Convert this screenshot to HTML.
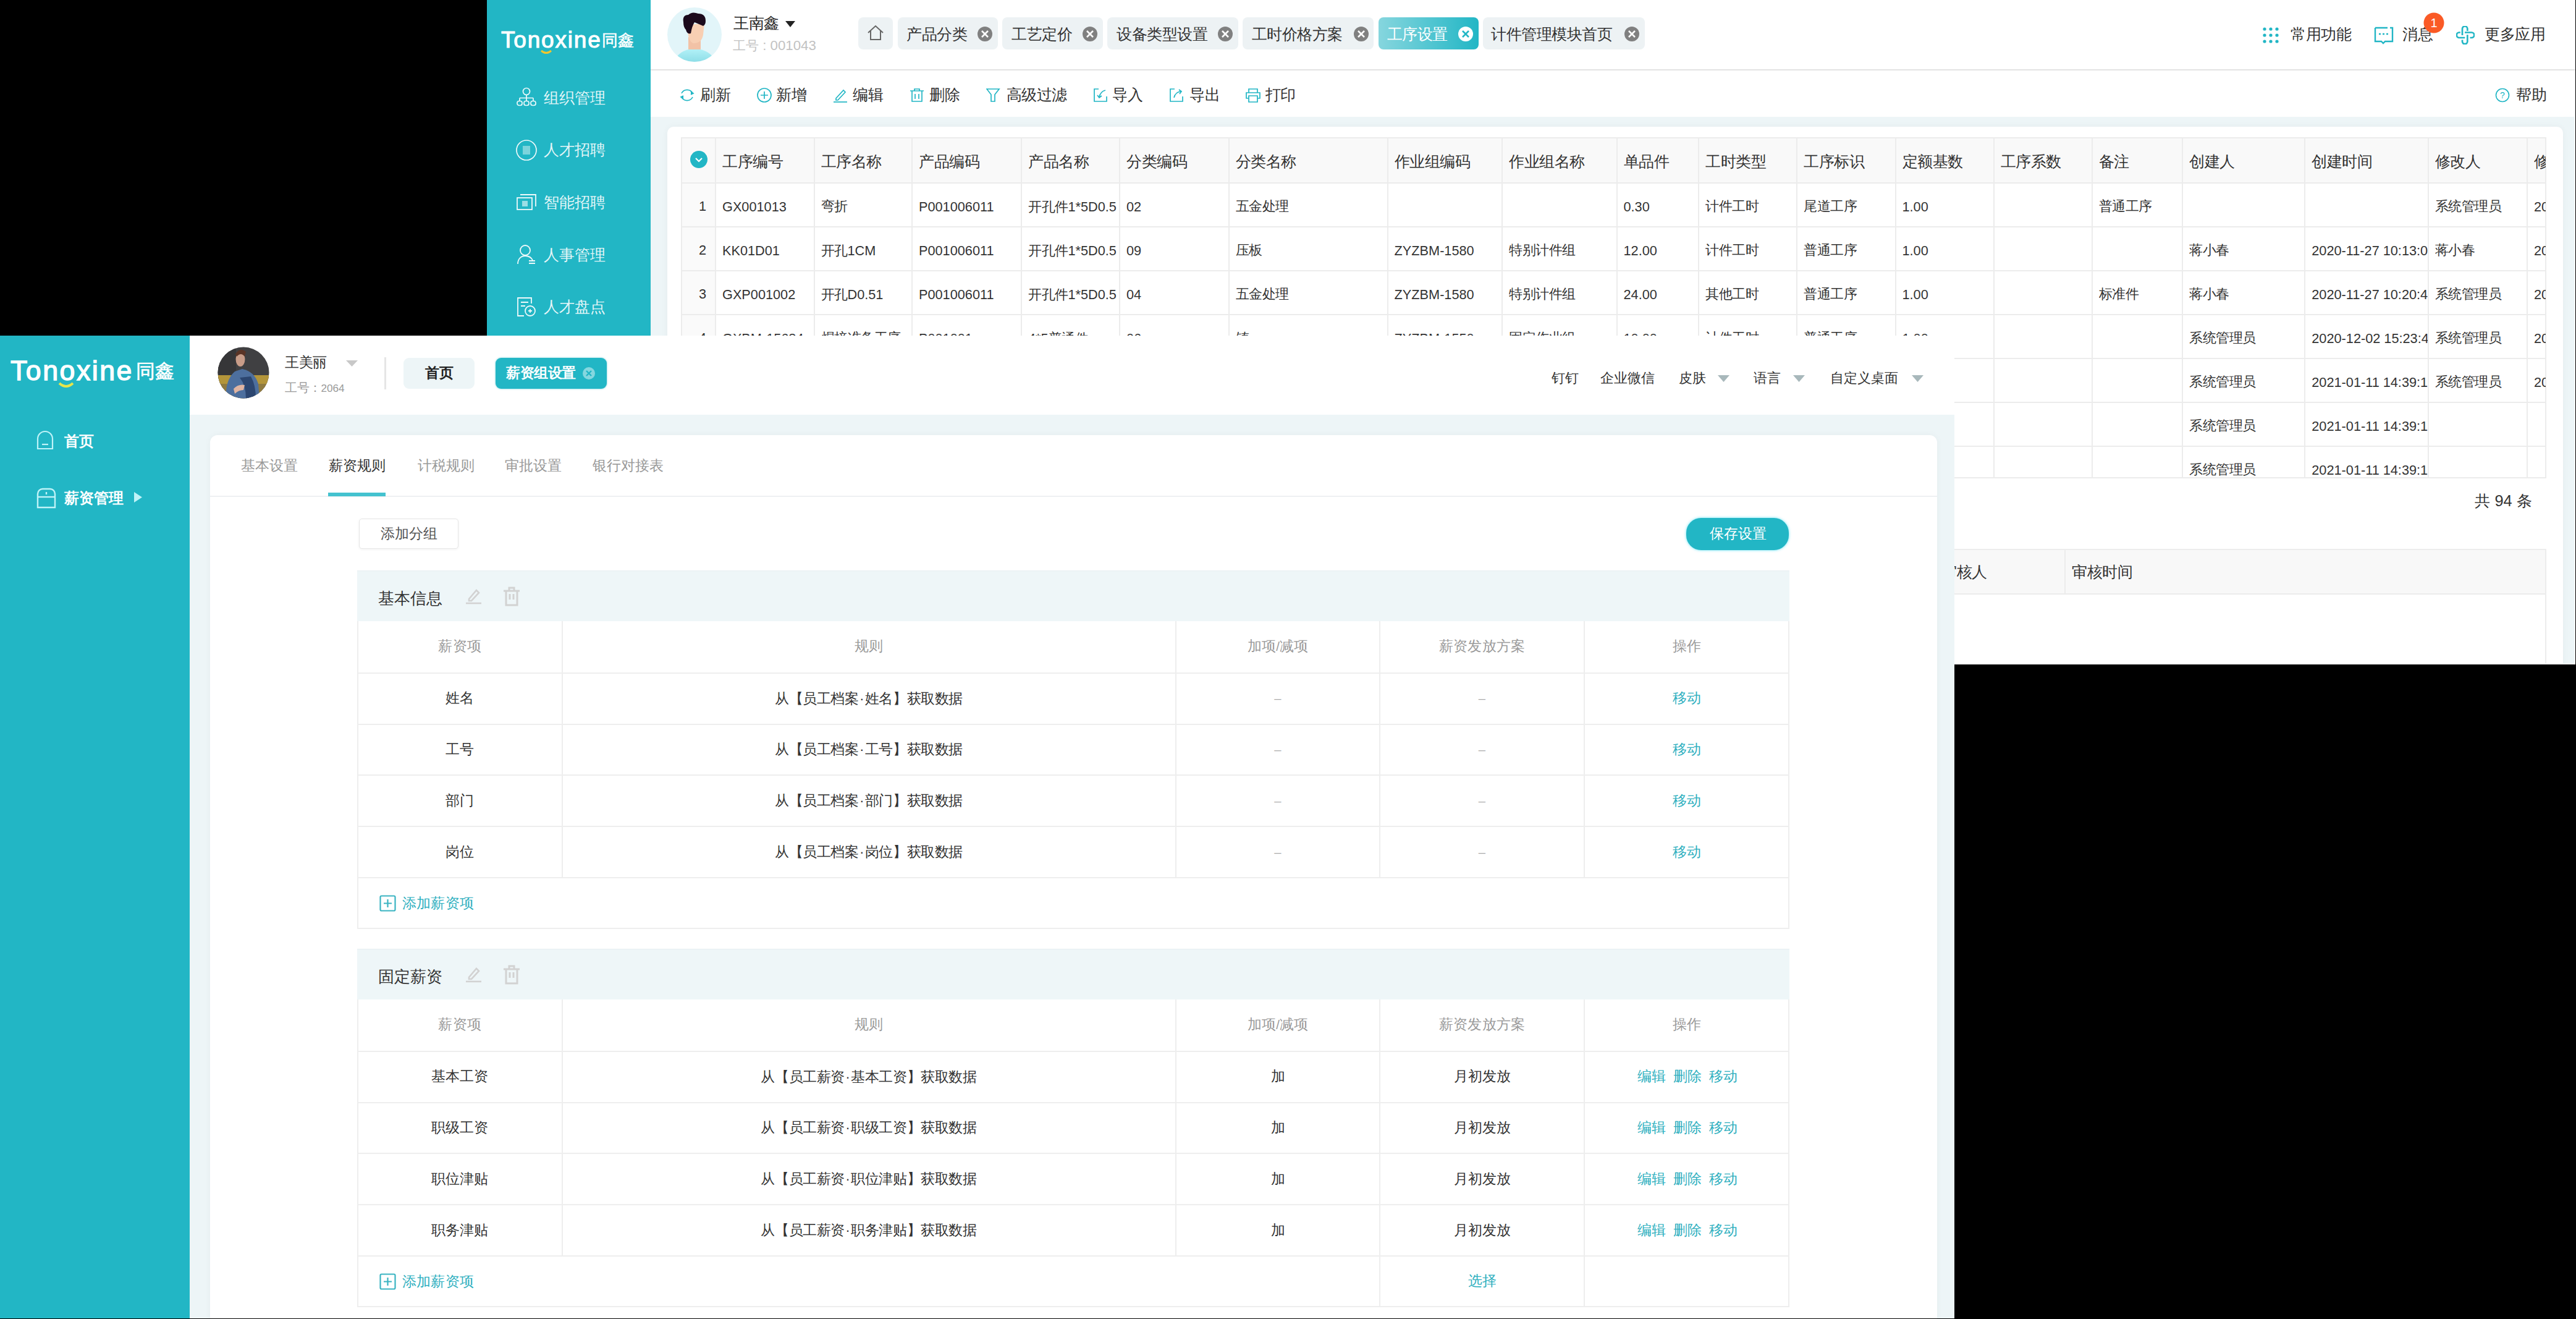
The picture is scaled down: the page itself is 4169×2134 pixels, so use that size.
<!DOCTYPE html>
<html><head><meta charset="utf-8"><style>
html,body{margin:0;padding:0}
body{width:4169px;height:2134px;position:relative;overflow:hidden;background:#000;font-family:"Liberation Sans",sans-serif}
div{position:absolute;box-sizing:border-box}
.layer{left:0;top:0;width:4169px;height:2134px}
i{font-style:normal;display:inline-block;width:1em;text-align:center}
u{text-decoration:none}
i.d{width:.45em}
</style></head><body>
<div class="layer" style="clip-path:inset(0px 0px 1059px 788px);background:transparent">
<div style="left:788px;top:0px;width:3381px;height:1075px;background:#edf5f7"></div>
<div style="left:788px;top:0px;width:265px;height:1075px;background:#22b6c5"></div>
<div style="left:811px;top:41.45px;font-size:37px;line-height:48.1px;color:#fff;font-weight:400;white-space:nowrap;letter-spacing:1.8px;-webkit-text-stroke:1.1px #fff">Tonoxine</div>
<div style="left:974px;top:49.42px;font-size:25.5px;line-height:33.15px;color:#fff;font-weight:400;white-space:nowrap;-webkit-text-stroke:0.5px #fff"><i>同</i><i>鑫</i></div>
<svg style="position:absolute;left:875px;top:81px;" width="18" height="8" viewBox="0 0 18 8"><path d="M1 1 Q9 8 17 1" stroke="#f2c62d" stroke-width="3" fill="none"/></svg>
<div style="left:880px;top:141.75px;font-size:25px;line-height:32.5px;color:rgba(255,255,255,0.88);font-weight:400;white-space:nowrap;"><i>组</i><i>织</i><i>管</i><i>理</i></div>
<svg style="position:absolute;left:835px;top:141px;" width="34" height="34" viewBox="0 0 34 34"><g stroke="#fff" stroke-width="1.7" fill="none" opacity=".92"><circle cx="17" cy="7" r="5.5"/><path d="M17 12.5v5M6 17.5h22M6 17.5v5M17 17.5v5M28 17.5v5"/><rect x="2" y="22.5" width="8" height="7" rx="3"/><rect x="13" y="22.5" width="8" height="7" rx="3"/><rect x="24" y="22.5" width="8" height="7" rx="3"/></g></svg>
<div style="left:880px;top:226.35px;font-size:25px;line-height:32.5px;color:rgba(255,255,255,0.88);font-weight:400;white-space:nowrap;"><i>人</i><i>才</i><i>招</i><i>聘</i></div>
<svg style="position:absolute;left:835px;top:226px;" width="34" height="34" viewBox="0 0 34 34"><g stroke="#fff" stroke-width="1.7" fill="none" opacity=".92"><circle cx="17" cy="17" r="16"/><rect x="11" y="10" width="12" height="14" fill="#fff" opacity=".45" stroke="none"/></g></svg>
<div style="left:880px;top:310.95px;font-size:25px;line-height:32.5px;color:rgba(255,255,255,0.88);font-weight:400;white-space:nowrap;"><i>智</i><i>能</i><i>招</i><i>聘</i></div>
<svg style="position:absolute;left:835px;top:310px;" width="34" height="34" viewBox="0 0 34 34"><g stroke="#fff" stroke-width="1.8" fill="none" opacity=".92"><rect x="2" y="10" width="24" height="19"/><path d="M7 5h25v19"/><rect x="10" y="15" width="9" height="9" fill="#fff" stroke="none" opacity=".6"/></g></svg>
<div style="left:880px;top:395.55px;font-size:25px;line-height:32.5px;color:rgba(255,255,255,0.88);font-weight:400;white-space:nowrap;"><i>人</i><i>事</i><i>管</i><i>理</i></div>
<svg style="position:absolute;left:835px;top:395px;" width="34" height="34" viewBox="0 0 34 34"><g stroke="#fff" stroke-width="1.8" fill="none" opacity=".92"><circle cx="15" cy="10" r="8"/><path d="M3 32c0-8 5-13 12-13s10 3 12 7"/><path d="M21 27h10M21 31h10"/></g></svg>
<div style="left:880px;top:480.15px;font-size:25px;line-height:32.5px;color:rgba(255,255,255,0.88);font-weight:400;white-space:nowrap;"><i>人</i><i>才</i><i>盘</i><i>点</i></div>
<svg style="position:absolute;left:835px;top:479px;" width="34" height="34" viewBox="0 0 34 34"><g stroke="#fff" stroke-width="1.8" fill="none" opacity=".92"><path d="M25 12V3H3v29h10"/><path d="M8 10h12M8 16h7"/><circle cx="23" cy="24" r="8"/><path d="M20 24h6M23 21v6"/></g></svg>
<div style="left:1053px;top:0px;width:3116px;height:113px;background:#fff"></div>
<div style="left:1053px;top:112px;width:3116px;height:2px;background:#e3e3e3"></div>
<svg style="position:absolute;left:1080px;top:12px;" width="88" height="88" viewBox="0 0 88 88"><defs><clipPath id="ca"><circle cx="44" cy="44" r="44"/></clipPath><linearGradient id="sh" x1="0" y1="0" x2="0" y2="1"><stop offset="0" stop-color="#b4f2f8"/><stop offset="1" stop-color="#8bdce6"/></linearGradient></defs>
<circle cx="44" cy="44" r="44" fill="#e2f5f9"/>
<g clip-path="url(#ca)">
<path d="M12 90 Q14 70 44 66 Q74 70 78 90Z" fill="url(#sh)"/>
<rect x="34" y="48" width="20" height="20" fill="#f2c2a6"/>
<path d="M33 28 Q32 54 42 58 Q56 58 58 44 L60 26Z" fill="#f8cfb3"/>
<path d="M26 24 Q24 12 34 12 Q40 6 50 10 Q62 10 62 22 Q62 28 58 30 L44 24 Q40 30 38 42 Q32 44 30 36 Q26 32 26 24Z" fill="#1b0a1c"/>
</g></svg>
<div style="left:1187px;top:22.07px;font-size:24.5px;line-height:31.85px;color:#222;font-weight:400;white-space:nowrap;"><i>王</i><i>南</i><i>鑫</i></div>
<svg style="position:absolute;left:1271px;top:34px;" width="16" height="10" viewBox="0 0 16 10"><path d="M0 0h16L8 10z" fill="#222"/></svg>
<div style="left:1186px;top:60.35px;font-size:21px;line-height:27.3px;color:#c2c2c2;font-weight:400;white-space:nowrap;"><i>工</i><i>号</i><u style="font-size:1.06em"> : 001043</u></div>
<div style="left:1389px;top:28px;width:56px;height:52px;background:#edf2f4;border-radius:8px"></div>
<svg style="position:absolute;left:1403px;top:40px;" width="28" height="26" viewBox="0 0 28 26"><path d="M2 13L14 2L26 13M6 10v14h16V10" stroke="#666" stroke-width="2" fill="none"/></svg>
<div style="left:1453px;top:28px;width:162px;height:52px;background:#edf2f4;border-radius:8px"></div>
<div style="left:1467px;top:40.08px;font-size:24.5px;line-height:31.85px;color:#333;font-weight:400;white-space:nowrap;"><i>产</i><i>品</i><i>分</i><i>类</i></div>
<svg style="position:absolute;left:1581.5px;top:43px;" width="24" height="24" viewBox="0 0 24 24"><circle cx="12" cy="12" r="12" fill="#808080"/><path d="M7 7L17 17M17 7L7 17" stroke="#fff" stroke-width="2.6"/></svg>
<div style="left:1622px;top:28px;width:162.5px;height:52px;background:#edf2f4;border-radius:8px"></div>
<div style="left:1637px;top:40.08px;font-size:24.5px;line-height:31.85px;color:#333;font-weight:400;white-space:nowrap;"><i>工</i><i>艺</i><i>定</i><i>价</i></div>
<svg style="position:absolute;left:1751.5px;top:43px;" width="24" height="24" viewBox="0 0 24 24"><circle cx="12" cy="12" r="12" fill="#808080"/><path d="M7 7L17 17M17 7L7 17" stroke="#fff" stroke-width="2.6"/></svg>
<div style="left:1792px;top:28px;width:211.5px;height:52px;background:#edf2f4;border-radius:8px"></div>
<div style="left:1807px;top:40.08px;font-size:24.5px;line-height:31.85px;color:#333;font-weight:400;white-space:nowrap;"><i>设</i><i>备</i><i>类</i><i>型</i><i>设</i><i>置</i></div>
<svg style="position:absolute;left:1971px;top:43px;" width="24" height="24" viewBox="0 0 24 24"><circle cx="12" cy="12" r="12" fill="#808080"/><path d="M7 7L17 17M17 7L7 17" stroke="#fff" stroke-width="2.6"/></svg>
<div style="left:2011px;top:28px;width:211.5px;height:52px;background:#edf2f4;border-radius:8px"></div>
<div style="left:2025.7px;top:40.08px;font-size:24.5px;line-height:31.85px;color:#333;font-weight:400;white-space:nowrap;"><i>工</i><i>时</i><i>价</i><i>格</i><i>方</i><i>案</i></div>
<svg style="position:absolute;left:2190.5px;top:43px;" width="24" height="24" viewBox="0 0 24 24"><circle cx="12" cy="12" r="12" fill="#808080"/><path d="M7 7L17 17M17 7L7 17" stroke="#fff" stroke-width="2.6"/></svg>
<div style="left:2231px;top:28px;width:161.5px;height:52px;background:linear-gradient(90deg,#86d6de,#22b6c5);border-radius:8px"></div>
<div style="left:2244.7px;top:40.08px;font-size:24.5px;line-height:31.85px;color:#fff;font-weight:400;white-space:nowrap;"><i>工</i><i>序</i><i>设</i><i>置</i></div>
<svg style="position:absolute;left:2359.6px;top:43px;" width="24" height="24" viewBox="0 0 24 24"><circle cx="12" cy="12" r="12" fill="#fff"/><path d="M7 7L17 17M17 7L7 17" stroke="#22b6c5" stroke-width="2.6"/></svg>
<div style="left:2400px;top:28px;width:261.5px;height:52px;background:#edf2f4;border-radius:8px"></div>
<div style="left:2413.4px;top:40.08px;font-size:24.5px;line-height:31.85px;color:#333;font-weight:400;white-space:nowrap;"><i>计</i><i>件</i><i>管</i><i>理</i><i>模</i><i>块</i><i>首</i><i>页</i></div>
<svg style="position:absolute;left:2628.6px;top:43px;" width="24" height="24" viewBox="0 0 24 24"><circle cx="12" cy="12" r="12" fill="#808080"/><path d="M7 7L17 17M17 7L7 17" stroke="#fff" stroke-width="2.6"/></svg>
<svg style="position:absolute;left:3662px;top:44px;" width="26" height="26" viewBox="0 0 26 26"><circle cx="3" cy="3" r="2.6" fill="#22b6c5"/><circle cx="3" cy="13" r="2.6" fill="#22b6c5"/><circle cx="3" cy="23" r="2.6" fill="#22b6c5"/><circle cx="13" cy="3" r="2.6" fill="#22b6c5"/><circle cx="13" cy="13" r="2.6" fill="#22b6c5"/><circle cx="13" cy="23" r="2.6" fill="#22b6c5"/><circle cx="23" cy="3" r="2.6" fill="#22b6c5"/><circle cx="23" cy="13" r="2.6" fill="#22b6c5"/><circle cx="23" cy="23" r="2.6" fill="#22b6c5"/></svg>
<div style="left:3707px;top:40.08px;font-size:24.5px;line-height:31.85px;color:#333;font-weight:400;white-space:nowrap;"><i>常</i><i>用</i><i>功</i><i>能</i></div>
<svg style="position:absolute;left:3842px;top:42px;" width="32" height="30" viewBox="0 0 32 30"><path d="M2 3h20M26 3h4v22H18l-3 3-3-3H2V3" stroke="#22b6c5" stroke-width="2.4" fill="none"/><path d="M8 13h3M14 13h3M20 13h3" stroke="#22b6c5" stroke-width="2.4"/></svg>
<div style="left:3888px;top:40.08px;font-size:24.5px;line-height:31.85px;color:#333;font-weight:400;white-space:nowrap;"><i>消</i><i>息</i></div>
<svg style="position:absolute;left:3922px;top:20px;" width="34" height="34" viewBox="0 0 34 34"><circle cx="17" cy="17" r="16.5" fill="#fa5a26"/></svg>
<div style="left:3924.0px;top:24.0px;width:30px;text-align:center;font-size:20px;line-height:26.0px;color:#fff;font-weight:400;white-space:nowrap;font-family:"Liberation Serif",serif">1</div>
<svg style="position:absolute;left:3974.5px;top:41.5px;" width="30" height="30" viewBox="0 0 30 30"><g stroke="#22b6c5" stroke-width="2.7" fill="none"><path d="M10 15V4.6A4.15 4.15 0 0 1 18.3 4.6V8"/><path d="M14 10.5H25A4.25 4.25 0 0 1 25 19H22.5"/><path d="M18.3 14.3V25A4.15 4.15 0 0 1 10 25V22.5"/><path d="M14.3 19H5A4.25 4.25 0 0 1 5 10.5H6.8"/></g></svg>
<div style="left:4021px;top:40.08px;font-size:24.5px;line-height:31.85px;color:#333;font-weight:400;white-space:nowrap;"><i>更</i><i>多</i><i>应</i><i>用</i></div>
<div style="left:1053px;top:114px;width:3116px;height:75px;background:#fff"></div>
<svg style="position:absolute;left:1099px;top:142px;" width="26" height="24" viewBox="0 0 26 24"><g stroke="#22b6c5" stroke-width="1.7" fill="none"><path d="M4 9A10 10 0 0 1 22 9"/><path d="M22 15A10 10 0 0 1 4 15"/><path d="M19 6l4 3-4 2" fill="#22b6c5"/><path d="M7 18l-4-3 4-2" fill="#22b6c5"/></g></svg>
<div style="left:1133px;top:138.07px;font-size:24.5px;line-height:31.85px;color:#333;font-weight:400;white-space:nowrap;"><i>刷</i><i>新</i></div>
<svg style="position:absolute;left:1224.5px;top:142px;" width="26" height="24" viewBox="0 0 26 24"><g stroke="#22b6c5" stroke-width="1.7" fill="none"><circle cx="12" cy="12" r="11"/><path d="M12 6v12M6 12h12"/></g></svg>
<div style="left:1256px;top:138.07px;font-size:24.5px;line-height:31.85px;color:#333;font-weight:400;white-space:nowrap;"><i>新</i><i>增</i></div>
<svg style="position:absolute;left:1348px;top:142px;" width="26" height="24" viewBox="0 0 26 24"><g stroke="#22b6c5" stroke-width="1.7" fill="none"><path d="M5 17L17 4l3 3L8 20H5z"/><path d="M1 23h22"/></g></svg>
<div style="left:1380px;top:138.07px;font-size:24.5px;line-height:31.85px;color:#333;font-weight:400;white-space:nowrap;"><i>编</i><i>辑</i></div>
<svg style="position:absolute;left:1472px;top:142px;" width="26" height="24" viewBox="0 0 26 24"><g stroke="#22b6c5" stroke-width="1.7" fill="none"><path d="M1 5h22M8 5V2h8v3M4 5v17h16V5M9 10v8M15 10v8"/></g></svg>
<div style="left:1504px;top:138.07px;font-size:24.5px;line-height:31.85px;color:#333;font-weight:400;white-space:nowrap;"><i>删</i><i>除</i></div>
<svg style="position:absolute;left:1596px;top:142px;" width="26" height="24" viewBox="0 0 26 24"><g stroke="#22b6c5" stroke-width="1.7" fill="none"><path d="M1 2h20l-7 9v11h-6V11z"/></g></svg>
<div style="left:1628.7px;top:138.07px;font-size:24.5px;line-height:31.85px;color:#333;font-weight:400;white-space:nowrap;"><i>高</i><i>级</i><i>过</i><i>滤</i></div>
<svg style="position:absolute;left:1769px;top:142px;" width="26" height="24" viewBox="0 0 26 24"><g stroke="#22b6c5" stroke-width="1.7" fill="none"><path d="M9 2H2v20h20v-8"/><path d="M20 4Q12 6 10 15M7 12l3 4 4-3"/></g></svg>
<div style="left:1800px;top:138.07px;font-size:24.5px;line-height:31.85px;color:#333;font-weight:400;white-space:nowrap;"><i>导</i><i>入</i></div>
<svg style="position:absolute;left:1892px;top:142px;" width="26" height="24" viewBox="0 0 26 24"><g stroke="#22b6c5" stroke-width="1.7" fill="none"><path d="M9 2H2v20h20v-8"/><path d="M8 16Q10 7 19 6M16 3l4 3-3 4"/></g></svg>
<div style="left:1925px;top:138.07px;font-size:24.5px;line-height:31.85px;color:#333;font-weight:400;white-space:nowrap;"><i>导</i><i>出</i></div>
<svg style="position:absolute;left:2015px;top:142px;" width="26" height="24" viewBox="0 0 26 24"><g stroke="#22b6c5" stroke-width="1.7" fill="none"><path d="M6 8V2h14v6M6 17H2V8h22v9h-4M6 13v10h14V13z"/></g></svg>
<div style="left:2047.6px;top:138.07px;font-size:24.5px;line-height:31.85px;color:#333;font-weight:400;white-space:nowrap;"><i>打</i><i>印</i></div>
<svg style="position:absolute;left:4038px;top:142px;" width="24" height="24" viewBox="0 0 24 24"><circle cx="12" cy="12" r="10.5" stroke="#22b6c5" stroke-width="1.6" fill="none"/><text x="12" y="17" font-size="14" text-anchor="middle" fill="#22b6c5" font-family="Liberation Sans">?</text></svg>
<div style="left:4072px;top:138.07px;font-size:24.5px;line-height:31.85px;color:#333;font-weight:400;white-space:nowrap;"><i>帮</i><i>助</i></div>
<div style="left:1080px;top:205px;width:3068px;height:900px;background:#fff;border-radius:10px;box-shadow:0 0 12px rgba(0,0,0,.045)"></div>
<div style="left:1103px;top:223px;width:3017px;height:73px;background:#f9f9f9"></div>
<div style="left:1103px;top:296px;width:55px;height:477px;background:#fafafa"></div>
<div style="left:1102px;top:222px;width:3018px;height:2px;background:#ececec"></div>
<div style="left:1102px;top:295px;width:3018px;height:2px;background:#ececec"></div>
<div style="left:1102px;top:366px;width:3018px;height:2px;background:#ececec"></div>
<div style="left:1102px;top:437px;width:3018px;height:2px;background:#ececec"></div>
<div style="left:1102px;top:508px;width:3018px;height:2px;background:#ececec"></div>
<div style="left:1102px;top:579px;width:3018px;height:2px;background:#ececec"></div>
<div style="left:1102px;top:650px;width:3018px;height:2px;background:#ececec"></div>
<div style="left:1102px;top:721px;width:3018px;height:2px;background:#ececec"></div>
<div style="left:1102px;top:772px;width:3018px;height:2px;background:#ececec"></div>
<div style="left:1102px;top:222px;width:2px;height:552px;background:#ececec"></div>
<div style="left:1157px;top:222px;width:2px;height:552px;background:#ececec"></div>
<div style="left:1316.5px;top:222px;width:2px;height:552px;background:#ececec"></div>
<div style="left:1475px;top:222px;width:2px;height:552px;background:#ececec"></div>
<div style="left:1652px;top:222px;width:2px;height:552px;background:#ececec"></div>
<div style="left:1811px;top:222px;width:2px;height:552px;background:#ececec"></div>
<div style="left:1987.5px;top:222px;width:2px;height:552px;background:#ececec"></div>
<div style="left:2244.6px;top:222px;width:2px;height:552px;background:#ececec"></div>
<div style="left:2430px;top:222px;width:2px;height:552px;background:#ececec"></div>
<div style="left:2615.5px;top:222px;width:2px;height:552px;background:#ececec"></div>
<div style="left:2748px;top:222px;width:2px;height:552px;background:#ececec"></div>
<div style="left:2907.3px;top:222px;width:2px;height:552px;background:#ececec"></div>
<div style="left:3066.5px;top:222px;width:2px;height:552px;background:#ececec"></div>
<div style="left:3225.5px;top:222px;width:2px;height:552px;background:#ececec"></div>
<div style="left:3384.6px;top:222px;width:2px;height:552px;background:#ececec"></div>
<div style="left:3531px;top:222px;width:2px;height:552px;background:#ececec"></div>
<div style="left:3729.3px;top:222px;width:2px;height:552px;background:#ececec"></div>
<div style="left:3928.5px;top:222px;width:2px;height:552px;background:#ececec"></div>
<div style="left:4089px;top:222px;width:2px;height:552px;background:#ececec"></div>
<div style="left:4119px;top:222px;width:2px;height:552px;background:#ececec"></div>
<svg style="position:absolute;left:1117px;top:244px;" width="28" height="28" viewBox="0 0 28 28"><circle cx="14" cy="14" r="14" fill="#22b6c5"/><path d="M9 12l5 5 5-5" stroke="#fff" stroke-width="2.2" fill="none"/></svg>
<div style="left:1169px;top:246.07px;font-size:24.5px;line-height:31.85px;color:#333;font-weight:400;white-space:nowrap;width:148.5px;overflow:hidden"><i>工</i><i>序</i><i>编</i><i>号</i></div>
<div style="left:1328.5px;top:246.07px;font-size:24.5px;line-height:31.85px;color:#333;font-weight:400;white-space:nowrap;width:147.5px;overflow:hidden"><i>工</i><i>序</i><i>名</i><i>称</i></div>
<div style="left:1487px;top:246.07px;font-size:24.5px;line-height:31.85px;color:#333;font-weight:400;white-space:nowrap;width:166px;overflow:hidden"><i>产</i><i>品</i><i>编</i><i>码</i></div>
<div style="left:1664px;top:246.07px;font-size:24.5px;line-height:31.85px;color:#333;font-weight:400;white-space:nowrap;width:148px;overflow:hidden"><i>产</i><i>品</i><i>名</i><i>称</i></div>
<div style="left:1823px;top:246.07px;font-size:24.5px;line-height:31.85px;color:#333;font-weight:400;white-space:nowrap;width:165.5px;overflow:hidden"><i>分</i><i>类</i><i>编</i><i>码</i></div>
<div style="left:1999.5px;top:246.07px;font-size:24.5px;line-height:31.85px;color:#333;font-weight:400;white-space:nowrap;width:246.0999999999999px;overflow:hidden"><i>分</i><i>类</i><i>名</i><i>称</i></div>
<div style="left:2256.6px;top:246.07px;font-size:24.5px;line-height:31.85px;color:#333;font-weight:400;white-space:nowrap;width:174.4000000000001px;overflow:hidden"><i>作</i><i>业</i><i>组</i><i>编</i><i>码</i></div>
<div style="left:2442px;top:246.07px;font-size:24.5px;line-height:31.85px;color:#333;font-weight:400;white-space:nowrap;width:174.5px;overflow:hidden"><i>作</i><i>业</i><i>组</i><i>名</i><i>称</i></div>
<div style="left:2627.5px;top:246.07px;font-size:24.5px;line-height:31.85px;color:#333;font-weight:400;white-space:nowrap;width:121.5px;overflow:hidden"><i>单</i><i>品</i><i>件</i></div>
<div style="left:2760px;top:246.07px;font-size:24.5px;line-height:31.85px;color:#333;font-weight:400;white-space:nowrap;width:148.30000000000018px;overflow:hidden"><i>工</i><i>时</i><i>类</i><i>型</i></div>
<div style="left:2919.3px;top:246.07px;font-size:24.5px;line-height:31.85px;color:#333;font-weight:400;white-space:nowrap;width:148.19999999999982px;overflow:hidden"><i>工</i><i>序</i><i>标</i><i>识</i></div>
<div style="left:3078.5px;top:246.07px;font-size:24.5px;line-height:31.85px;color:#333;font-weight:400;white-space:nowrap;width:148.0px;overflow:hidden"><i>定</i><i>额</i><i>基</i><i>数</i></div>
<div style="left:3237.5px;top:246.07px;font-size:24.5px;line-height:31.85px;color:#333;font-weight:400;white-space:nowrap;width:148.0999999999999px;overflow:hidden"><i>工</i><i>序</i><i>系</i><i>数</i></div>
<div style="left:3396.6px;top:246.07px;font-size:24.5px;line-height:31.85px;color:#333;font-weight:400;white-space:nowrap;width:135.4000000000001px;overflow:hidden"><i>备</i><i>注</i></div>
<div style="left:3543px;top:246.07px;font-size:24.5px;line-height:31.85px;color:#333;font-weight:400;white-space:nowrap;width:187.30000000000018px;overflow:hidden"><i>创</i><i>建</i><i>人</i></div>
<div style="left:3741.3px;top:246.07px;font-size:24.5px;line-height:31.85px;color:#333;font-weight:400;white-space:nowrap;width:188.19999999999982px;overflow:hidden"><i>创</i><i>建</i><i>时</i><i>间</i></div>
<div style="left:3940.5px;top:246.07px;font-size:24.5px;line-height:31.85px;color:#333;font-weight:400;white-space:nowrap;width:149.5px;overflow:hidden"><i>修</i><i>改</i><i>人</i></div>
<div style="left:4101px;top:246.07px;font-size:24.5px;line-height:31.85px;color:#333;font-weight:400;white-space:nowrap;width:19px;overflow:hidden"><i>修</i><i>改</i><i>时</i><i>间</i></div>
<div style="left:1103px;top:296px;width:3017px;height:477px;overflow:hidden">
<div style="left:0px;top:24.36px;width:40px;text-align:right;font-size:21.75px;line-height:28.28px;color:#333;font-weight:400;white-space:nowrap;">1</div>
<div style="left:66px;top:24.52px;font-size:21.5px;line-height:27.95px;color:#333;font-weight:400;white-space:nowrap;width:148.5px;overflow:hidden"><u style="font-size:1.01em">GX001013</u></div>
<div style="left:225.5px;top:24.52px;font-size:21.5px;line-height:27.95px;color:#333;font-weight:400;white-space:nowrap;width:147.5px;overflow:hidden"><i>弯</i><i>折</i></div>
<div style="left:384px;top:24.52px;font-size:21.5px;line-height:27.95px;color:#333;font-weight:400;white-space:nowrap;width:166px;overflow:hidden"><u style="font-size:1.01em">P001006011</u></div>
<div style="left:561px;top:24.52px;font-size:21.5px;line-height:27.95px;color:#333;font-weight:400;white-space:nowrap;width:148px;overflow:hidden"><i>开</i><i>孔</i><i>件</i><u style="font-size:1.01em">1*5D0.5</u></div>
<div style="left:720px;top:24.52px;font-size:21.5px;line-height:27.95px;color:#333;font-weight:400;white-space:nowrap;width:165.5px;overflow:hidden"><u style="font-size:1.01em">02</u></div>
<div style="left:896.5px;top:24.52px;font-size:21.5px;line-height:27.95px;color:#333;font-weight:400;white-space:nowrap;width:246.0999999999999px;overflow:hidden"><i>五</i><i>金</i><i>处</i><i>理</i></div>
<div style="left:1524.5px;top:24.52px;font-size:21.5px;line-height:27.95px;color:#333;font-weight:400;white-space:nowrap;width:121.5px;overflow:hidden"><u style="font-size:1.01em">0.30</u></div>
<div style="left:1657px;top:24.52px;font-size:21.5px;line-height:27.95px;color:#333;font-weight:400;white-space:nowrap;width:148.30000000000018px;overflow:hidden"><i>计</i><i>件</i><i>工</i><i>时</i></div>
<div style="left:1816.3000000000002px;top:24.52px;font-size:21.5px;line-height:27.95px;color:#333;font-weight:400;white-space:nowrap;width:148.19999999999982px;overflow:hidden"><i>尾</i><i>道</i><i>工</i><i>序</i></div>
<div style="left:1975.5px;top:24.52px;font-size:21.5px;line-height:27.95px;color:#333;font-weight:400;white-space:nowrap;width:148.0px;overflow:hidden"><u style="font-size:1.01em">1.00</u></div>
<div style="left:2293.6px;top:24.52px;font-size:21.5px;line-height:27.95px;color:#333;font-weight:400;white-space:nowrap;width:135.4000000000001px;overflow:hidden"><i>普</i><i>通</i><i>工</i><i>序</i></div>
<div style="left:2837.5px;top:24.52px;font-size:21.5px;line-height:27.95px;color:#333;font-weight:400;white-space:nowrap;width:149.5px;overflow:hidden"><i>系</i><i>统</i><i>管</i><i>理</i><i>员</i></div>
<div style="left:2998px;top:24.52px;font-size:21.5px;line-height:27.95px;color:#333;font-weight:400;white-space:nowrap;width:19px;overflow:hidden"><u style="font-size:1.01em">2021-01-11</u></div>
<div style="left:0px;top:95.36px;width:40px;text-align:right;font-size:21.75px;line-height:28.28px;color:#333;font-weight:400;white-space:nowrap;">2</div>
<div style="left:66px;top:95.53px;font-size:21.5px;line-height:27.95px;color:#333;font-weight:400;white-space:nowrap;width:148.5px;overflow:hidden"><u style="font-size:1.01em">KK01D01</u></div>
<div style="left:225.5px;top:95.53px;font-size:21.5px;line-height:27.95px;color:#333;font-weight:400;white-space:nowrap;width:147.5px;overflow:hidden"><i>开</i><i>孔</i><u style="font-size:1.01em">1CM</u></div>
<div style="left:384px;top:95.53px;font-size:21.5px;line-height:27.95px;color:#333;font-weight:400;white-space:nowrap;width:166px;overflow:hidden"><u style="font-size:1.01em">P001006011</u></div>
<div style="left:561px;top:95.53px;font-size:21.5px;line-height:27.95px;color:#333;font-weight:400;white-space:nowrap;width:148px;overflow:hidden"><i>开</i><i>孔</i><i>件</i><u style="font-size:1.01em">1*5D0.5</u></div>
<div style="left:720px;top:95.53px;font-size:21.5px;line-height:27.95px;color:#333;font-weight:400;white-space:nowrap;width:165.5px;overflow:hidden"><u style="font-size:1.01em">09</u></div>
<div style="left:896.5px;top:95.53px;font-size:21.5px;line-height:27.95px;color:#333;font-weight:400;white-space:nowrap;width:246.0999999999999px;overflow:hidden"><i>压</i><i>板</i></div>
<div style="left:1153.6px;top:95.53px;font-size:21.5px;line-height:27.95px;color:#333;font-weight:400;white-space:nowrap;width:174.4000000000001px;overflow:hidden"><u style="font-size:1.01em">ZYZBM-1580</u></div>
<div style="left:1339px;top:95.53px;font-size:21.5px;line-height:27.95px;color:#333;font-weight:400;white-space:nowrap;width:174.5px;overflow:hidden"><i>特</i><i>别</i><i>计</i><i>件</i><i>组</i></div>
<div style="left:1524.5px;top:95.53px;font-size:21.5px;line-height:27.95px;color:#333;font-weight:400;white-space:nowrap;width:121.5px;overflow:hidden"><u style="font-size:1.01em">12.00</u></div>
<div style="left:1657px;top:95.53px;font-size:21.5px;line-height:27.95px;color:#333;font-weight:400;white-space:nowrap;width:148.30000000000018px;overflow:hidden"><i>计</i><i>件</i><i>工</i><i>时</i></div>
<div style="left:1816.3000000000002px;top:95.53px;font-size:21.5px;line-height:27.95px;color:#333;font-weight:400;white-space:nowrap;width:148.19999999999982px;overflow:hidden"><i>普</i><i>通</i><i>工</i><i>序</i></div>
<div style="left:1975.5px;top:95.53px;font-size:21.5px;line-height:27.95px;color:#333;font-weight:400;white-space:nowrap;width:148.0px;overflow:hidden"><u style="font-size:1.01em">1.00</u></div>
<div style="left:2440px;top:95.53px;font-size:21.5px;line-height:27.95px;color:#333;font-weight:400;white-space:nowrap;width:187.30000000000018px;overflow:hidden"><i>蒋</i><i>小</i><i>春</i></div>
<div style="left:2638.3px;top:95.53px;font-size:21.5px;line-height:27.95px;color:#333;font-weight:400;white-space:nowrap;width:188.19999999999982px;overflow:hidden"><u style="font-size:1.01em">2020-11-27 10:13:05</u></div>
<div style="left:2837.5px;top:95.53px;font-size:21.5px;line-height:27.95px;color:#333;font-weight:400;white-space:nowrap;width:149.5px;overflow:hidden"><i>蒋</i><i>小</i><i>春</i></div>
<div style="left:2998px;top:95.53px;font-size:21.5px;line-height:27.95px;color:#333;font-weight:400;white-space:nowrap;width:19px;overflow:hidden"><u style="font-size:1.01em">2020-11-27</u></div>
<div style="left:0px;top:166.36px;width:40px;text-align:right;font-size:21.75px;line-height:28.28px;color:#333;font-weight:400;white-space:nowrap;">3</div>
<div style="left:66px;top:166.53px;font-size:21.5px;line-height:27.95px;color:#333;font-weight:400;white-space:nowrap;width:148.5px;overflow:hidden"><u style="font-size:1.01em">GXP001002</u></div>
<div style="left:225.5px;top:166.53px;font-size:21.5px;line-height:27.95px;color:#333;font-weight:400;white-space:nowrap;width:147.5px;overflow:hidden"><i>开</i><i>孔</i><u style="font-size:1.01em">D0.51</u></div>
<div style="left:384px;top:166.53px;font-size:21.5px;line-height:27.95px;color:#333;font-weight:400;white-space:nowrap;width:166px;overflow:hidden"><u style="font-size:1.01em">P001006011</u></div>
<div style="left:561px;top:166.53px;font-size:21.5px;line-height:27.95px;color:#333;font-weight:400;white-space:nowrap;width:148px;overflow:hidden"><i>开</i><i>孔</i><i>件</i><u style="font-size:1.01em">1*5D0.5</u></div>
<div style="left:720px;top:166.53px;font-size:21.5px;line-height:27.95px;color:#333;font-weight:400;white-space:nowrap;width:165.5px;overflow:hidden"><u style="font-size:1.01em">04</u></div>
<div style="left:896.5px;top:166.53px;font-size:21.5px;line-height:27.95px;color:#333;font-weight:400;white-space:nowrap;width:246.0999999999999px;overflow:hidden"><i>五</i><i>金</i><i>处</i><i>理</i></div>
<div style="left:1153.6px;top:166.53px;font-size:21.5px;line-height:27.95px;color:#333;font-weight:400;white-space:nowrap;width:174.4000000000001px;overflow:hidden"><u style="font-size:1.01em">ZYZBM-1580</u></div>
<div style="left:1339px;top:166.53px;font-size:21.5px;line-height:27.95px;color:#333;font-weight:400;white-space:nowrap;width:174.5px;overflow:hidden"><i>特</i><i>别</i><i>计</i><i>件</i><i>组</i></div>
<div style="left:1524.5px;top:166.53px;font-size:21.5px;line-height:27.95px;color:#333;font-weight:400;white-space:nowrap;width:121.5px;overflow:hidden"><u style="font-size:1.01em">24.00</u></div>
<div style="left:1657px;top:166.53px;font-size:21.5px;line-height:27.95px;color:#333;font-weight:400;white-space:nowrap;width:148.30000000000018px;overflow:hidden"><i>其</i><i>他</i><i>工</i><i>时</i></div>
<div style="left:1816.3000000000002px;top:166.53px;font-size:21.5px;line-height:27.95px;color:#333;font-weight:400;white-space:nowrap;width:148.19999999999982px;overflow:hidden"><i>普</i><i>通</i><i>工</i><i>序</i></div>
<div style="left:1975.5px;top:166.53px;font-size:21.5px;line-height:27.95px;color:#333;font-weight:400;white-space:nowrap;width:148.0px;overflow:hidden"><u style="font-size:1.01em">1.00</u></div>
<div style="left:2293.6px;top:166.53px;font-size:21.5px;line-height:27.95px;color:#333;font-weight:400;white-space:nowrap;width:135.4000000000001px;overflow:hidden"><i>标</i><i>准</i><i>件</i></div>
<div style="left:2440px;top:166.53px;font-size:21.5px;line-height:27.95px;color:#333;font-weight:400;white-space:nowrap;width:187.30000000000018px;overflow:hidden"><i>蒋</i><i>小</i><i>春</i></div>
<div style="left:2638.3px;top:166.53px;font-size:21.5px;line-height:27.95px;color:#333;font-weight:400;white-space:nowrap;width:188.19999999999982px;overflow:hidden"><u style="font-size:1.01em">2020-11-27 10:20:41</u></div>
<div style="left:2837.5px;top:166.53px;font-size:21.5px;line-height:27.95px;color:#333;font-weight:400;white-space:nowrap;width:149.5px;overflow:hidden"><i>系</i><i>统</i><i>管</i><i>理</i><i>员</i></div>
<div style="left:2998px;top:166.53px;font-size:21.5px;line-height:27.95px;color:#333;font-weight:400;white-space:nowrap;width:19px;overflow:hidden"><u style="font-size:1.01em">2021-01-11</u></div>
<div style="left:0px;top:237.36px;width:40px;text-align:right;font-size:21.75px;line-height:28.28px;color:#333;font-weight:400;white-space:nowrap;">4</div>
<div style="left:66px;top:237.53px;font-size:21.5px;line-height:27.95px;color:#333;font-weight:400;white-space:nowrap;width:148.5px;overflow:hidden"><u style="font-size:1.01em">GXBM-15684</u></div>
<div style="left:225.5px;top:237.53px;font-size:21.5px;line-height:27.95px;color:#333;font-weight:400;white-space:nowrap;width:147.5px;overflow:hidden"><i>焊</i><i>接</i><i>准</i><i>备</i><i>工</i><i>序</i></div>
<div style="left:384px;top:237.53px;font-size:21.5px;line-height:27.95px;color:#333;font-weight:400;white-space:nowrap;width:166px;overflow:hidden"><u style="font-size:1.01em">P001001</u></div>
<div style="left:561px;top:237.53px;font-size:21.5px;line-height:27.95px;color:#333;font-weight:400;white-space:nowrap;width:148px;overflow:hidden"><u style="font-size:1.01em">4*5</u><i>普</i><i>通</i><i>件</i></div>
<div style="left:720px;top:237.53px;font-size:21.5px;line-height:27.95px;color:#333;font-weight:400;white-space:nowrap;width:165.5px;overflow:hidden"><u style="font-size:1.01em">06</u></div>
<div style="left:896.5px;top:237.53px;font-size:21.5px;line-height:27.95px;color:#333;font-weight:400;white-space:nowrap;width:246.0999999999999px;overflow:hidden"><i>铸</i></div>
<div style="left:1153.6px;top:237.53px;font-size:21.5px;line-height:27.95px;color:#333;font-weight:400;white-space:nowrap;width:174.4000000000001px;overflow:hidden"><u style="font-size:1.01em">ZYZBM-1550</u></div>
<div style="left:1339px;top:237.53px;font-size:21.5px;line-height:27.95px;color:#333;font-weight:400;white-space:nowrap;width:174.5px;overflow:hidden"><i>固</i><i>定</i><i>作</i><i>业</i><i>组</i></div>
<div style="left:1524.5px;top:237.53px;font-size:21.5px;line-height:27.95px;color:#333;font-weight:400;white-space:nowrap;width:121.5px;overflow:hidden"><u style="font-size:1.01em">10.00</u></div>
<div style="left:1657px;top:237.53px;font-size:21.5px;line-height:27.95px;color:#333;font-weight:400;white-space:nowrap;width:148.30000000000018px;overflow:hidden"><i>计</i><i>件</i><i>工</i><i>时</i></div>
<div style="left:1816.3000000000002px;top:237.53px;font-size:21.5px;line-height:27.95px;color:#333;font-weight:400;white-space:nowrap;width:148.19999999999982px;overflow:hidden"><i>普</i><i>通</i><i>工</i><i>序</i></div>
<div style="left:1975.5px;top:237.53px;font-size:21.5px;line-height:27.95px;color:#333;font-weight:400;white-space:nowrap;width:148.0px;overflow:hidden"><u style="font-size:1.01em">1.00</u></div>
<div style="left:2440px;top:237.53px;font-size:21.5px;line-height:27.95px;color:#333;font-weight:400;white-space:nowrap;width:187.30000000000018px;overflow:hidden"><i>系</i><i>统</i><i>管</i><i>理</i><i>员</i></div>
<div style="left:2638.3px;top:237.53px;font-size:21.5px;line-height:27.95px;color:#333;font-weight:400;white-space:nowrap;width:188.19999999999982px;overflow:hidden"><u style="font-size:1.01em">2020-12-02 15:23:41</u></div>
<div style="left:2837.5px;top:237.53px;font-size:21.5px;line-height:27.95px;color:#333;font-weight:400;white-space:nowrap;width:149.5px;overflow:hidden"><i>系</i><i>统</i><i>管</i><i>理</i><i>员</i></div>
<div style="left:2998px;top:237.53px;font-size:21.5px;line-height:27.95px;color:#333;font-weight:400;white-space:nowrap;width:19px;overflow:hidden"><u style="font-size:1.01em">2021-01-11</u></div>
<div style="left:0px;top:308.36px;width:40px;text-align:right;font-size:21.75px;line-height:28.28px;color:#333;font-weight:400;white-space:nowrap;">5</div>
<div style="left:2440px;top:308.52px;font-size:21.5px;line-height:27.95px;color:#333;font-weight:400;white-space:nowrap;width:187.30000000000018px;overflow:hidden"><i>系</i><i>统</i><i>管</i><i>理</i><i>员</i></div>
<div style="left:2638.3px;top:308.52px;font-size:21.5px;line-height:27.95px;color:#333;font-weight:400;white-space:nowrap;width:188.19999999999982px;overflow:hidden"><u style="font-size:1.01em">2021-01-11 14:39:12</u></div>
<div style="left:2837.5px;top:308.52px;font-size:21.5px;line-height:27.95px;color:#333;font-weight:400;white-space:nowrap;width:149.5px;overflow:hidden"><i>系</i><i>统</i><i>管</i><i>理</i><i>员</i></div>
<div style="left:2998px;top:308.52px;font-size:21.5px;line-height:27.95px;color:#333;font-weight:400;white-space:nowrap;width:19px;overflow:hidden"><u style="font-size:1.01em">2021-01-11</u></div>
<div style="left:0px;top:379.36px;width:40px;text-align:right;font-size:21.75px;line-height:28.28px;color:#333;font-weight:400;white-space:nowrap;">6</div>
<div style="left:2440px;top:379.52px;font-size:21.5px;line-height:27.95px;color:#333;font-weight:400;white-space:nowrap;width:187.30000000000018px;overflow:hidden"><i>系</i><i>统</i><i>管</i><i>理</i><i>员</i></div>
<div style="left:2638.3px;top:379.52px;font-size:21.5px;line-height:27.95px;color:#333;font-weight:400;white-space:nowrap;width:188.19999999999982px;overflow:hidden"><u style="font-size:1.01em">2021-01-11 14:39:12</u></div>
<div style="left:0px;top:450.36px;width:40px;text-align:right;font-size:21.75px;line-height:28.28px;color:#333;font-weight:400;white-space:nowrap;">7</div>
<div style="left:2440px;top:450.52px;font-size:21.5px;line-height:27.95px;color:#333;font-weight:400;white-space:nowrap;width:187.30000000000018px;overflow:hidden"><i>系</i><i>统</i><i>管</i><i>理</i><i>员</i></div>
<div style="left:2638.3px;top:450.52px;font-size:21.5px;line-height:27.95px;color:#333;font-weight:400;white-space:nowrap;width:188.19999999999982px;overflow:hidden"><u style="font-size:1.01em">2021-01-11 14:39:12</u></div>
</div>
<div style="left:4005px;top:794.49px;font-size:25.4px;line-height:33.02px;color:#333;font-weight:400;white-space:nowrap;"><i>共</i> 94 <i>条</i></div>
<div style="left:1103px;top:888px;width:3017px;height:73px;background:#f8f8f8"></div>
<div style="left:1103px;top:888px;width:3017px;height:2px;background:#ececec"></div>
<div style="left:1103px;top:960px;width:3017px;height:2px;background:#ececec"></div>
<div style="left:3341px;top:888px;width:2px;height:73px;background:#ececec"></div>
<div style="left:4119px;top:888px;width:2px;height:200px;background:#ececec"></div>
<div style="left:3142px;top:910.08px;font-size:24.5px;line-height:31.85px;color:#333;font-weight:400;white-space:nowrap;"><i>审</i><i>核</i><i>人</i></div>
<div style="left:3353px;top:910.08px;font-size:24.5px;line-height:31.85px;color:#333;font-weight:400;white-space:nowrap;"><i>审</i><i>核</i><i>时</i><i>间</i></div>
<div style="left:4167px;top:189px;width:1px;height:886px;background:#fff"></div>
<div style="left:788px;top:1074px;width:3380px;height:1px;background:#fff"></div>
</div>
<div class="layer" style="clip-path:inset(543px 1006px 0px 0px);background:transparent">
<div style="left:0px;top:543px;width:3163px;height:1591px;background:#edf5f7"></div>
<div style="left:0px;top:543px;width:307px;height:1591px;background:#22b6c5"></div>
<div style="left:17px;top:570.95px;font-size:44.7px;line-height:58.11px;color:#fff;font-weight:400;white-space:nowrap;letter-spacing:2.5px;-webkit-text-stroke:1.4px #fff">Tonoxine</div>
<div style="left:220px;top:580.85px;font-size:31px;line-height:40.3px;color:#fff;font-weight:400;white-space:nowrap;-webkit-text-stroke:0.6px #fff"><i>同</i><i>鑫</i></div>
<svg style="position:absolute;left:94px;top:618px;" width="26" height="12" viewBox="0 0 26 12"><path d="M2 2 Q13 12 24 2" stroke="#e6e64a" stroke-width="4" fill="none"/></svg>
<svg style="position:absolute;left:58px;top:696px;" width="30" height="32" viewBox="0 0 30 32"><g stroke="#bff3f8" stroke-width="2.2" fill="none"><path d="M3 30V14A12 12 0 0 1 27 14V30Z"/><path d="M10 23h10"/></g></svg>
<div style="left:104px;top:698.4px;font-size:24px;line-height:31.2px;color:#fff;font-weight:700;white-space:nowrap;"><i>首</i><i>页</i></div>
<svg style="position:absolute;left:58px;top:787px;" width="34" height="36" viewBox="0 0 34 36"><g stroke="#bff3f8" stroke-width="2.4" fill="none"><path d="M3 34V12A8 8 0 0 1 11 4H23A8 8 0 0 1 31 12V34Z"/><path d="M3 17H31"/><path d="M17 9v4"/></g></svg>
<div style="left:104px;top:790.4px;font-size:24px;line-height:31.2px;color:#fff;font-weight:700;white-space:nowrap;"><i>薪</i><i>资</i><i>管</i><i>理</i></div>
<svg style="position:absolute;left:217px;top:796px;" width="13" height="17" viewBox="0 0 13 17"><path d="M0 0L13 8.5L0 17Z" fill="#bff3f8"/></svg>
<div style="left:307px;top:543px;width:2856px;height:128px;background:#fff"></div>
<svg style="position:absolute;left:352px;top:561px;" width="84" height="84" viewBox="0 0 84 84"><defs><clipPath id="cf"><circle cx="42" cy="42" r="41.5"/></clipPath></defs>
<g clip-path="url(#cf)"><rect width="84" height="84" fill="#404042"/>
<rect x="0" y="0" width="30" height="84" fill="#363638"/>
<rect x="0" y="46" width="84" height="14" fill="#b3953a"/>
<rect x="0" y="60" width="84" height="24" fill="#8f7a40"/>
<path d="M14 84 Q12 54 28 40 L40 36 Q60 40 66 60 L68 84Z" fill="#4d6f9e"/>
<path d="M36 50 Q46 62 46 84 L62 84 Q62 62 54 48Z" fill="#2c4670"/>
<ellipse cx="37" cy="20" rx="7.5" ry="12" fill="#c89c88"/>
<path d="M29 12 Q36 0 46 8 L44 16 Q38 8 31 16Z" fill="#5a3426"/>
<path d="M26 68 Q34 60 44 62 L42 70 Q34 70 28 76Z" fill="#e0b4a2"/>
</g></svg>
<div style="left:461px;top:572.38px;font-size:22.5px;line-height:29.25px;color:#333;font-weight:400;white-space:nowrap;"><i>王</i><i>美</i><i>丽</i></div>
<svg style="position:absolute;left:560px;top:583px;" width="19" height="10" viewBox="0 0 19 10"><path d="M0 0H19L9.5 10Z" fill="#c8c8c8"/></svg>
<div style="left:461px;top:615.33px;font-size:19.5px;line-height:25.35px;color:#9a9a9a;font-weight:400;white-space:nowrap;"><i>工</i><i>号</i><i>：</i><u style="font-size:0.88em">2064</u></div>
<div style="left:622px;top:578px;width:3px;height:52px;background:#e6e6e6"></div>
<div style="left:653px;top:579px;width:115px;height:50px;background:#edf5f7;border-radius:9px"></div>
<div style="left:653.0px;top:589.05px;width:115px;text-align:center;font-size:23px;line-height:29.9px;color:#222;font-weight:600;white-space:nowrap;"><i>首</i><i>页</i></div>
<div style="left:802px;top:579px;width:180px;height:50px;background:#22b6c5;border-radius:9px;box-shadow:0 0 3px rgba(34,182,197,.6)"></div>
<div style="left:819px;top:589.38px;font-size:22.5px;line-height:29.25px;color:#fff;font-weight:700;white-space:nowrap;"><i>薪</i><i>资</i><i>组</i><i>设</i><i>置</i></div>
<svg style="position:absolute;left:942px;top:593px;" width="22" height="22" viewBox="0 0 22 22"><circle cx="11" cy="11" r="10" fill="rgba(255,255,255,.45)"/><path d="M7 7L15 15M15 7L7 15" stroke="#22b6c5" stroke-width="2.4"/></svg>
<div style="left:2510.6px;top:597.7px;font-size:22px;line-height:28.6px;color:#333;font-weight:400;white-space:nowrap;"><i>钉</i><i>钉</i></div>
<div style="left:2590px;top:597.7px;font-size:22px;line-height:28.6px;color:#333;font-weight:400;white-space:nowrap;"><i>企</i><i>业</i><i>微</i><i>信</i></div>
<div style="left:2717px;top:597.7px;font-size:22px;line-height:28.6px;color:#333;font-weight:400;white-space:nowrap;"><i>皮</i><i>肤</i></div>
<div style="left:2838px;top:597.7px;font-size:22px;line-height:28.6px;color:#333;font-weight:400;white-space:nowrap;"><i>语</i><i>言</i></div>
<div style="left:2962px;top:597.7px;font-size:22px;line-height:28.6px;color:#333;font-weight:400;white-space:nowrap;"><i>自</i><i>定</i><i>义</i><i>桌</i><i>面</i></div>
<svg style="position:absolute;left:2780px;top:607px;" width="19" height="11" viewBox="0 0 19 11"><path d="M0 0H19L9.5 11Z" fill="#a8b8bb"/></svg>
<svg style="position:absolute;left:2902px;top:607px;" width="19" height="11" viewBox="0 0 19 11"><path d="M0 0H19L9.5 11Z" fill="#a8b8bb"/></svg>
<svg style="position:absolute;left:3094px;top:607px;" width="19" height="11" viewBox="0 0 19 11"><path d="M0 0H19L9.5 11Z" fill="#a8b8bb"/></svg>
<div style="left:340px;top:704px;width:2795px;height:1500px;background:#fff;border-radius:12px;box-shadow:0 0 12px rgba(0,0,0,.04)"></div>
<div style="left:390px;top:738.55px;font-size:23px;line-height:29.9px;color:#999;font-weight:400;white-space:nowrap;"><i>基</i><i>本</i><i>设</i><i>置</i></div>
<div style="left:532px;top:738.55px;font-size:23px;line-height:29.9px;color:#333;font-weight:400;white-space:nowrap;"><i>薪</i><i>资</i><i>规</i><i>则</i></div>
<div style="left:675.5px;top:738.55px;font-size:23px;line-height:29.9px;color:#999;font-weight:400;white-space:nowrap;"><i>计</i><i>税</i><i>规</i><i>则</i></div>
<div style="left:817px;top:738.55px;font-size:23px;line-height:29.9px;color:#999;font-weight:400;white-space:nowrap;"><i>审</i><i>批</i><i>设</i><i>置</i></div>
<div style="left:959px;top:738.55px;font-size:23px;line-height:29.9px;color:#999;font-weight:400;white-space:nowrap;"><i>银</i><i>行</i><i>对</i><i>接</i><i>表</i></div>
<div style="left:340px;top:802px;width:2795px;height:2px;background:#eef0f2"></div>
<div style="left:531px;top:797px;width:93px;height:6px;background:#44c2cf"></div>
<div style="left:581px;top:839px;width:161px;height:49px;background:#fff;border:1.5px solid #e6e6e6;border-radius:5px;box-shadow:0 1px 4px rgba(0,0,0,.06)"></div>
<div style="left:581.0px;top:848.55px;width:161px;text-align:center;font-size:23px;line-height:29.9px;color:#555;font-weight:400;white-space:nowrap;"><i>添</i><i>加</i><i>分</i><i>组</i></div>
<div style="left:2729px;top:838px;width:166px;height:52px;background:#22b6c5;border-radius:24px;box-shadow:0 0 4px rgba(0,210,240,.6)"></div>
<div style="left:2730.0px;top:849.05px;width:166px;text-align:center;font-size:23px;line-height:29.9px;color:#fff;font-weight:400;white-space:nowrap;"><i>保</i><i>存</i><i>设</i><i>置</i></div>
<div style="left:578px;top:923px;width:2318px;height:82px;background:#eef6f8;border-top:1.5px solid #e6eef1"></div>
<div style="left:612px;top:951.6px;font-size:26px;line-height:33.8px;color:#333;font-weight:400;white-space:nowrap;"><i>基</i><i>本</i><i>信</i><i>息</i></div>
<svg style="position:absolute;left:753px;top:951px;" width="28" height="28" viewBox="0 0 28 28"><g stroke="#d2d2d2" stroke-width="2.6" fill="none"><path d="M6 18L18 4l4 4L10 21H6z"/><path d="M1 25h25"/></g></svg>
<svg style="position:absolute;left:814px;top:949px;" width="28" height="32" viewBox="0 0 28 32"><g stroke="#d2d2d2" stroke-width="3" fill="none"><path d="M1 7h26M10 6V2h8v4M5 7v23h18V7M11 12v9M17 12v9"/></g></svg>
<div style="left:578px;top:1005px;width:2px;height:497px;background:#eeeeee"></div>
<div style="left:2894px;top:1005px;width:2px;height:497px;background:#eeeeee"></div>
<div style="left:578px;top:1088px;width:2318px;height:2px;background:#eeeeee"></div>
<div style="left:578px;top:1170.5px;width:2318px;height:2px;background:#eeeeee"></div>
<div style="left:578px;top:1253px;width:2318px;height:2px;background:#eeeeee"></div>
<div style="left:578px;top:1336px;width:2318px;height:2px;background:#eeeeee"></div>
<div style="left:578px;top:1419px;width:2318px;height:2px;background:#eeeeee"></div>
<div style="left:578px;top:1501px;width:2318px;height:2px;background:#eeeeee"></div>
<div style="left:909px;top:1005px;width:2px;height:415px;background:#eeeeee"></div>
<div style="left:1901.5px;top:1005px;width:2px;height:415px;background:#eeeeee"></div>
<div style="left:2232px;top:1005px;width:2px;height:415px;background:#eeeeee"></div>
<div style="left:2563px;top:1005px;width:2px;height:415px;background:#eeeeee"></div>
<div style="left:544.0px;top:1030.42px;width:400px;text-align:center;font-size:23.2px;line-height:30.16px;color:#9a9a9a;font-weight:400;white-space:nowrap;"><i>薪</i><i>资</i><i>项</i></div>
<div style="left:1206.0px;top:1030.42px;width:400px;text-align:center;font-size:23.2px;line-height:30.16px;color:#9a9a9a;font-weight:400;white-space:nowrap;"><i>规</i><i>则</i></div>
<div style="left:1868.0px;top:1030.42px;width:400px;text-align:center;font-size:23.2px;line-height:30.16px;color:#9a9a9a;font-weight:400;white-space:nowrap;"><i>加</i><i>项</i><u style="font-size:0.88em">/</u><i>减</i><i>项</i></div>
<div style="left:2198.5px;top:1030.42px;width:400px;text-align:center;font-size:23.2px;line-height:30.16px;color:#9a9a9a;font-weight:400;white-space:nowrap;"><i>薪</i><i>资</i><i>发</i><i>放</i><i>方</i><i>案</i></div>
<div style="left:2530.0px;top:1030.42px;width:400px;text-align:center;font-size:23.2px;line-height:30.16px;color:#9a9a9a;font-weight:400;white-space:nowrap;"><i>操</i><i>作</i></div>
<div style="left:594.0px;top:1115.3px;width:300px;text-align:center;font-size:23px;line-height:29.9px;color:#333;font-weight:400;white-space:nowrap;"><i>姓</i><i>名</i></div>
<div style="left:956.0px;top:1115.56px;width:900px;text-align:center;font-size:22.6px;line-height:29.38px;color:#333;font-weight:400;white-space:nowrap;"><i>从</i><i>【</i><i>员</i><i>工</i><i>档</i><i>案</i><i class="d">·</i><i>姓</i><i>名</i><i>】</i><i>获</i><i>取</i><i>数</i><i>据</i></div>
<div style="left:1918.0px;top:1115.3px;width:300px;text-align:center;font-size:23px;line-height:29.9px;color:#aaa;font-weight:400;white-space:nowrap;"><u style="font-size:0.88em">–</u></div>
<div style="left:2248.5px;top:1115.3px;width:300px;text-align:center;font-size:23px;line-height:29.9px;color:#aaa;font-weight:400;white-space:nowrap;"><u style="font-size:0.88em">–</u></div>
<div style="left:2580.0px;top:1115.3px;width:300px;text-align:center;font-size:23px;line-height:29.9px;color:#2fb0c0;font-weight:400;white-space:nowrap;"><i>移</i><i>动</i></div>
<div style="left:594.0px;top:1197.8px;width:300px;text-align:center;font-size:23px;line-height:29.9px;color:#333;font-weight:400;white-space:nowrap;"><i>工</i><i>号</i></div>
<div style="left:956.0px;top:1198.06px;width:900px;text-align:center;font-size:22.6px;line-height:29.38px;color:#333;font-weight:400;white-space:nowrap;"><i>从</i><i>【</i><i>员</i><i>工</i><i>档</i><i>案</i><i class="d">·</i><i>工</i><i>号</i><i>】</i><i>获</i><i>取</i><i>数</i><i>据</i></div>
<div style="left:1918.0px;top:1197.8px;width:300px;text-align:center;font-size:23px;line-height:29.9px;color:#aaa;font-weight:400;white-space:nowrap;"><u style="font-size:0.88em">–</u></div>
<div style="left:2248.5px;top:1197.8px;width:300px;text-align:center;font-size:23px;line-height:29.9px;color:#aaa;font-weight:400;white-space:nowrap;"><u style="font-size:0.88em">–</u></div>
<div style="left:2580.0px;top:1197.8px;width:300px;text-align:center;font-size:23px;line-height:29.9px;color:#2fb0c0;font-weight:400;white-space:nowrap;"><i>移</i><i>动</i></div>
<div style="left:594.0px;top:1280.55px;width:300px;text-align:center;font-size:23px;line-height:29.9px;color:#333;font-weight:400;white-space:nowrap;"><i>部</i><i>门</i></div>
<div style="left:956.0px;top:1280.81px;width:900px;text-align:center;font-size:22.6px;line-height:29.38px;color:#333;font-weight:400;white-space:nowrap;"><i>从</i><i>【</i><i>员</i><i>工</i><i>档</i><i>案</i><i class="d">·</i><i>部</i><i>门</i><i>】</i><i>获</i><i>取</i><i>数</i><i>据</i></div>
<div style="left:1918.0px;top:1280.55px;width:300px;text-align:center;font-size:23px;line-height:29.9px;color:#aaa;font-weight:400;white-space:nowrap;"><u style="font-size:0.88em">–</u></div>
<div style="left:2248.5px;top:1280.55px;width:300px;text-align:center;font-size:23px;line-height:29.9px;color:#aaa;font-weight:400;white-space:nowrap;"><u style="font-size:0.88em">–</u></div>
<div style="left:2580.0px;top:1280.55px;width:300px;text-align:center;font-size:23px;line-height:29.9px;color:#2fb0c0;font-weight:400;white-space:nowrap;"><i>移</i><i>动</i></div>
<div style="left:594.0px;top:1363.55px;width:300px;text-align:center;font-size:23px;line-height:29.9px;color:#333;font-weight:400;white-space:nowrap;"><i>岗</i><i>位</i></div>
<div style="left:956.0px;top:1363.81px;width:900px;text-align:center;font-size:22.6px;line-height:29.38px;color:#333;font-weight:400;white-space:nowrap;"><i>从</i><i>【</i><i>员</i><i>工</i><i>档</i><i>案</i><i class="d">·</i><i>岗</i><i>位</i><i>】</i><i>获</i><i>取</i><i>数</i><i>据</i></div>
<div style="left:1918.0px;top:1363.55px;width:300px;text-align:center;font-size:23px;line-height:29.9px;color:#aaa;font-weight:400;white-space:nowrap;"><u style="font-size:0.88em">–</u></div>
<div style="left:2248.5px;top:1363.55px;width:300px;text-align:center;font-size:23px;line-height:29.9px;color:#aaa;font-weight:400;white-space:nowrap;"><u style="font-size:0.88em">–</u></div>
<div style="left:2580.0px;top:1363.55px;width:300px;text-align:center;font-size:23px;line-height:29.9px;color:#2fb0c0;font-weight:400;white-space:nowrap;"><i>移</i><i>动</i></div>
<svg style="position:absolute;left:614px;top:1447.5px;" width="27" height="27" viewBox="0 0 27 27"><g stroke="#3ab4c2" stroke-width="2.2" fill="none"><rect x="1.5" y="1.5" width="24" height="24" rx="2"/><path d="M13.5 7v13M7 13.5h13"/></g></svg>
<div style="left:651px;top:1445.92px;font-size:23.2px;line-height:30.16px;color:#2fb0c0;font-weight:400;white-space:nowrap;"><i>添</i><i>加</i><i>薪</i><i>资</i><i>项</i></div>
<div style="left:578px;top:1535px;width:2318px;height:82px;background:#eef6f8;border-top:1.5px solid #e6eef1"></div>
<div style="left:612px;top:1563.6px;font-size:26px;line-height:33.8px;color:#333;font-weight:400;white-space:nowrap;"><i>固</i><i>定</i><i>薪</i><i>资</i></div>
<svg style="position:absolute;left:753px;top:1563px;" width="28" height="28" viewBox="0 0 28 28"><g stroke="#d2d2d2" stroke-width="2.6" fill="none"><path d="M6 18L18 4l4 4L10 21H6z"/><path d="M1 25h25"/></g></svg>
<svg style="position:absolute;left:814px;top:1561px;" width="28" height="32" viewBox="0 0 28 32"><g stroke="#d2d2d2" stroke-width="3" fill="none"><path d="M1 7h26M10 6V2h8v4M5 7v23h18V7M11 12v9M17 12v9"/></g></svg>
<div style="left:578px;top:1617px;width:2px;height:497px;background:#eeeeee"></div>
<div style="left:2894px;top:1617px;width:2px;height:497px;background:#eeeeee"></div>
<div style="left:578px;top:1700px;width:2318px;height:2px;background:#eeeeee"></div>
<div style="left:578px;top:1782.5px;width:2318px;height:2px;background:#eeeeee"></div>
<div style="left:578px;top:1865px;width:2318px;height:2px;background:#eeeeee"></div>
<div style="left:578px;top:1948px;width:2318px;height:2px;background:#eeeeee"></div>
<div style="left:578px;top:2031px;width:2318px;height:2px;background:#eeeeee"></div>
<div style="left:578px;top:2113px;width:2318px;height:2px;background:#eeeeee"></div>
<div style="left:909px;top:1617px;width:2px;height:415px;background:#eeeeee"></div>
<div style="left:1901.5px;top:1617px;width:2px;height:415px;background:#eeeeee"></div>
<div style="left:2232px;top:1617px;width:2px;height:415px;background:#eeeeee"></div>
<div style="left:2563px;top:1617px;width:2px;height:415px;background:#eeeeee"></div>
<div style="left:544.0px;top:1642.42px;width:400px;text-align:center;font-size:23.2px;line-height:30.16px;color:#9a9a9a;font-weight:400;white-space:nowrap;"><i>薪</i><i>资</i><i>项</i></div>
<div style="left:1206.0px;top:1642.42px;width:400px;text-align:center;font-size:23.2px;line-height:30.16px;color:#9a9a9a;font-weight:400;white-space:nowrap;"><i>规</i><i>则</i></div>
<div style="left:1868.0px;top:1642.42px;width:400px;text-align:center;font-size:23.2px;line-height:30.16px;color:#9a9a9a;font-weight:400;white-space:nowrap;"><i>加</i><i>项</i><u style="font-size:0.88em">/</u><i>减</i><i>项</i></div>
<div style="left:2198.5px;top:1642.42px;width:400px;text-align:center;font-size:23.2px;line-height:30.16px;color:#9a9a9a;font-weight:400;white-space:nowrap;"><i>薪</i><i>资</i><i>发</i><i>放</i><i>方</i><i>案</i></div>
<div style="left:2530.0px;top:1642.42px;width:400px;text-align:center;font-size:23.2px;line-height:30.16px;color:#9a9a9a;font-weight:400;white-space:nowrap;"><i>操</i><i>作</i></div>
<div style="left:594.0px;top:1727.3px;width:300px;text-align:center;font-size:23px;line-height:29.9px;color:#333;font-weight:400;white-space:nowrap;"><i>基</i><i>本</i><i>工</i><i>资</i></div>
<div style="left:956.0px;top:1727.56px;width:900px;text-align:center;font-size:22.6px;line-height:29.38px;color:#333;font-weight:400;white-space:nowrap;"><i>从</i><i>【</i><i>员</i><i>工</i><i>薪</i><i>资</i><i class="d">·</i><i>基</i><i>本</i><i>工</i><i>资</i><i>】</i><i>获</i><i>取</i><i>数</i><i>据</i></div>
<div style="left:1918.0px;top:1727.3px;width:300px;text-align:center;font-size:23px;line-height:29.9px;color:#333;font-weight:400;white-space:nowrap;"><i>加</i></div>
<div style="left:2248.5px;top:1727.3px;width:300px;text-align:center;font-size:23px;line-height:29.9px;color:#333;font-weight:400;white-space:nowrap;"><i>月</i><i>初</i><i>发</i><i>放</i></div>
<div style="left:2623.0px;top:1727.3px;width:100px;text-align:center;font-size:23px;line-height:29.9px;color:#2fb0c0;font-weight:400;white-space:nowrap;"><i>编</i><i>辑</i></div>
<div style="left:2681.0px;top:1727.3px;width:100px;text-align:center;font-size:23px;line-height:29.9px;color:#2fb0c0;font-weight:400;white-space:nowrap;"><i>删</i><i>除</i></div>
<div style="left:2739.0px;top:1727.3px;width:100px;text-align:center;font-size:23px;line-height:29.9px;color:#2fb0c0;font-weight:400;white-space:nowrap;"><i>移</i><i>动</i></div>
<div style="left:594.0px;top:1809.8px;width:300px;text-align:center;font-size:23px;line-height:29.9px;color:#333;font-weight:400;white-space:nowrap;"><i>职</i><i>级</i><i>工</i><i>资</i></div>
<div style="left:956.0px;top:1810.06px;width:900px;text-align:center;font-size:22.6px;line-height:29.38px;color:#333;font-weight:400;white-space:nowrap;"><i>从</i><i>【</i><i>员</i><i>工</i><i>薪</i><i>资</i><i class="d">·</i><i>职</i><i>级</i><i>工</i><i>资</i><i>】</i><i>获</i><i>取</i><i>数</i><i>据</i></div>
<div style="left:1918.0px;top:1809.8px;width:300px;text-align:center;font-size:23px;line-height:29.9px;color:#333;font-weight:400;white-space:nowrap;"><i>加</i></div>
<div style="left:2248.5px;top:1809.8px;width:300px;text-align:center;font-size:23px;line-height:29.9px;color:#333;font-weight:400;white-space:nowrap;"><i>月</i><i>初</i><i>发</i><i>放</i></div>
<div style="left:2623.0px;top:1809.8px;width:100px;text-align:center;font-size:23px;line-height:29.9px;color:#2fb0c0;font-weight:400;white-space:nowrap;"><i>编</i><i>辑</i></div>
<div style="left:2681.0px;top:1809.8px;width:100px;text-align:center;font-size:23px;line-height:29.9px;color:#2fb0c0;font-weight:400;white-space:nowrap;"><i>删</i><i>除</i></div>
<div style="left:2739.0px;top:1809.8px;width:100px;text-align:center;font-size:23px;line-height:29.9px;color:#2fb0c0;font-weight:400;white-space:nowrap;"><i>移</i><i>动</i></div>
<div style="left:594.0px;top:1892.55px;width:300px;text-align:center;font-size:23px;line-height:29.9px;color:#333;font-weight:400;white-space:nowrap;"><i>职</i><i>位</i><i>津</i><i>贴</i></div>
<div style="left:956.0px;top:1892.81px;width:900px;text-align:center;font-size:22.6px;line-height:29.38px;color:#333;font-weight:400;white-space:nowrap;"><i>从</i><i>【</i><i>员</i><i>工</i><i>薪</i><i>资</i><i class="d">·</i><i>职</i><i>位</i><i>津</i><i>贴</i><i>】</i><i>获</i><i>取</i><i>数</i><i>据</i></div>
<div style="left:1918.0px;top:1892.55px;width:300px;text-align:center;font-size:23px;line-height:29.9px;color:#333;font-weight:400;white-space:nowrap;"><i>加</i></div>
<div style="left:2248.5px;top:1892.55px;width:300px;text-align:center;font-size:23px;line-height:29.9px;color:#333;font-weight:400;white-space:nowrap;"><i>月</i><i>初</i><i>发</i><i>放</i></div>
<div style="left:2623.0px;top:1892.55px;width:100px;text-align:center;font-size:23px;line-height:29.9px;color:#2fb0c0;font-weight:400;white-space:nowrap;"><i>编</i><i>辑</i></div>
<div style="left:2681.0px;top:1892.55px;width:100px;text-align:center;font-size:23px;line-height:29.9px;color:#2fb0c0;font-weight:400;white-space:nowrap;"><i>删</i><i>除</i></div>
<div style="left:2739.0px;top:1892.55px;width:100px;text-align:center;font-size:23px;line-height:29.9px;color:#2fb0c0;font-weight:400;white-space:nowrap;"><i>移</i><i>动</i></div>
<div style="left:594.0px;top:1975.55px;width:300px;text-align:center;font-size:23px;line-height:29.9px;color:#333;font-weight:400;white-space:nowrap;"><i>职</i><i>务</i><i>津</i><i>贴</i></div>
<div style="left:956.0px;top:1975.81px;width:900px;text-align:center;font-size:22.6px;line-height:29.38px;color:#333;font-weight:400;white-space:nowrap;"><i>从</i><i>【</i><i>员</i><i>工</i><i>薪</i><i>资</i><i class="d">·</i><i>职</i><i>务</i><i>津</i><i>贴</i><i>】</i><i>获</i><i>取</i><i>数</i><i>据</i></div>
<div style="left:1918.0px;top:1975.55px;width:300px;text-align:center;font-size:23px;line-height:29.9px;color:#333;font-weight:400;white-space:nowrap;"><i>加</i></div>
<div style="left:2248.5px;top:1975.55px;width:300px;text-align:center;font-size:23px;line-height:29.9px;color:#333;font-weight:400;white-space:nowrap;"><i>月</i><i>初</i><i>发</i><i>放</i></div>
<div style="left:2623.0px;top:1975.55px;width:100px;text-align:center;font-size:23px;line-height:29.9px;color:#2fb0c0;font-weight:400;white-space:nowrap;"><i>编</i><i>辑</i></div>
<div style="left:2681.0px;top:1975.55px;width:100px;text-align:center;font-size:23px;line-height:29.9px;color:#2fb0c0;font-weight:400;white-space:nowrap;"><i>删</i><i>除</i></div>
<div style="left:2739.0px;top:1975.55px;width:100px;text-align:center;font-size:23px;line-height:29.9px;color:#2fb0c0;font-weight:400;white-space:nowrap;"><i>移</i><i>动</i></div>
<svg style="position:absolute;left:614px;top:2059.5px;" width="27" height="27" viewBox="0 0 27 27"><g stroke="#3ab4c2" stroke-width="2.2" fill="none"><rect x="1.5" y="1.5" width="24" height="24" rx="2"/><path d="M13.5 7v13M7 13.5h13"/></g></svg>
<div style="left:651px;top:2057.92px;font-size:23.2px;line-height:30.16px;color:#2fb0c0;font-weight:400;white-space:nowrap;"><i>添</i><i>加</i><i>薪</i><i>资</i><i>项</i></div>
<div style="left:2232px;top:2032px;width:2px;height:82px;background:#eeeeee"></div>
<div style="left:2563px;top:2032px;width:2px;height:82px;background:#eeeeee"></div>
<div style="left:2248.5px;top:2058.05px;width:300px;text-align:center;font-size:23px;line-height:29.9px;color:#2fb0c0;font-weight:400;white-space:nowrap;"><i>选</i><i>择</i></div>
</div>
<div style="left:0px;top:2133px;width:4169px;height:1px;background:#000"></div>
<div style="left:4168px;top:0px;width:1px;height:2134px;background:#000"></div>
</body></html>
